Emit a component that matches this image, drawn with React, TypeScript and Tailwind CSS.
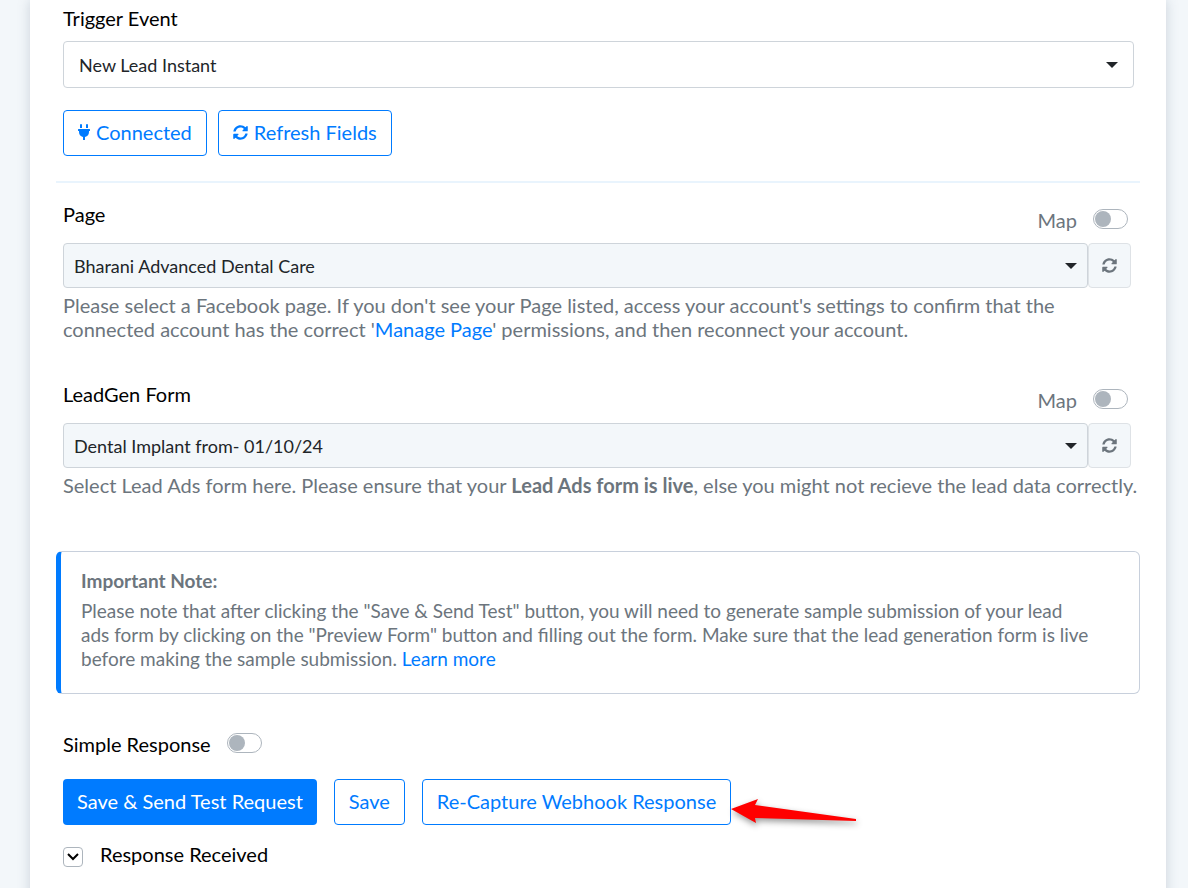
import { useState } from "react";
import type { ReactNode } from "react";
import { FaPlug, FaSyncAlt } from "react-icons/fa";

type ToggleProps = {
  id: string;
  label: string;
  labelClassName: string;
};

function Toggle({ id, label, labelClassName }: Readonly<ToggleProps>) {
  return (
    <div className="flex items-start gap-4">
      <label htmlFor={id} className={labelClassName}>
        {label}
      </label>
      <input
        id={id}
        type="checkbox"
        className="h-5 w-[35px] cursor-pointer appearance-none rounded-full border border-[#adb5bd] bg-white p-px before:block before:size-4 before:rounded-full before:bg-[#adb5bd] checked:border-[#007bff] checked:before:translate-x-[15px] checked:before:bg-[#007bff]"
      />
    </div>
  );
}

function Caret({ className }: Readonly<{ className: string }>) {
  return (
    <svg
      viewBox="0 0 12 6"
      className={`pointer-events-none absolute h-[6px] w-3 fill-[#212529] ${className}`}
      aria-hidden="true"
    >
      <path d="M0 0h12L6 6z" />
    </svg>
  );
}

type MappedFieldProps = {
  id: string;
  label: string;
  value: string;
  children: ReactNode;
};

function MappedField({ id, label, value, children }: Readonly<MappedFieldProps>) {
  return (
    <div className="pr-[9px] pl-[7px]">
      <div className="flex h-[41px] items-start justify-between pr-[3px]">
        <label htmlFor={id} className="leading-6 text-black">
          {label}
        </label>
        <div className="pt-[7px]">
          <Toggle
            id={`${id}-map`}
            label="Map"
            labelClassName="leading-[22px] text-[#6c757d]"
          />
        </div>
      </div>
      <div className="flex h-[45px]">
        <div className="relative flex-1">
          <select
            id={id}
            className="h-full w-full appearance-none rounded-[4px] border border-[#ced4da] bg-[#f3f7fa] px-[10px] text-lg text-[#212529]"
          >
            <option>{value}</option>
          </select>
          <Caret className="top-5 right-[11px]" />
        </div>
        <button
          type="button"
          aria-label={`Refresh ${label}`}
          className="flex w-[43px] items-center justify-center rounded-[4px] border border-[#dee2e6] bg-[#f3f7fa] text-[#6c757d]"
        >
          <FaSyncAlt className="size-[15px]" />
        </button>
      </div>
      <p className="-mr-[9px] pt-[5px] leading-6 text-[#6c757d]">{children}</p>
    </div>
  );
}

const outlineButton =
  "flex h-[46px] items-center rounded-[4px] border border-[#007bff] bg-white px-[14px] pb-[2px] text-[#007bff]";

export default function App() {
  const [open, setOpen] = useState(false);

  return (
    <div className="min-h-screen bg-[#f3f7fa] pr-[22px] pl-[30px] font-['Lato','Liberation_Sans',sans-serif] text-[20px]">
      <main className="min-h-screen bg-white px-[26px] pt-[6px] pb-10 shadow-[0_0_12px_rgba(60,80,110,0.22)]">
        <section className="pr-[6px] pl-[7px]">
          <label htmlFor="trigger-event" className="block h-[35px] leading-6 text-black">
            Trigger Event
          </label>
          <div className="relative h-[47px]">
            <select
              id="trigger-event"
              className="h-full w-full appearance-none rounded-[4px] border border-[#ced4da] bg-white px-[15px] text-lg text-[#212529]"
            >
              <option>New Lead Instant</option>
            </select>
            <Caret className="top-[21px] right-4" />
          </div>
          <div className="flex gap-[11px] pt-[22px] pb-[25px]">
            <button type="button" className={`${outlineButton} gap-[6px]`}>
              <FaPlug className="h-4 w-3" />
              Connected
            </button>
            <button type="button" className={`${outlineButton} gap-[6px]`}>
              <FaSyncAlt className="size-[15px]" />
              Refresh Fields
            </button>
          </div>
        </section>

        <hr className="mb-[19px] border-t-2 border-[#e9f4fd]" />

        <MappedField id="page" label="Page" value="Bharani Advanced Dental Care">
          Please select a Facebook page. If you don't see your Page listed, access your account's
          settings to confirm that the connected account has the correct '
          <a href="#manage-page" className="text-[#007bff]">
            Manage Page
          </a>
          ' permissions, and then reconnect your account.
        </MappedField>

        <div className="pt-[41px]">
          <MappedField id="leadgen-form" label="LeadGen Form" value="Dental Implant from- 01/10/24">
            Select Lead Ads form here. Please ensure that your{" "}
            <strong>Lead Ads form is live</strong>, else you might not recieve the lead data
            correctly.
          </MappedField>
        </div>

        <aside className="mt-[54px] rounded-[6px] border border-l-[5px] border-[#c8d0dc] border-l-[#007bff] pt-[17px] pr-12 pb-[22px] pl-5 text-[19px] leading-6 text-[#6c757d]">
          <h2 className="pb-[6px] font-bold">Important Note:</h2>
          <p>
            Please note that after clicking the "Save &amp; Send Test" button, you will need to
            generate sample submission of your lead ads form by clicking on the "Preview Form"
            button and filling out the form. Make sure that the lead generation form is live before
            making the sample submission.{" "}
            <a href="#learn-more" className="text-[#007bff]">
              Learn more
            </a>
          </p>
        </aside>

        <section className="pt-[39px] pr-[6px] pl-[7px]">
          <Toggle
            id="simple-response"
            label="Simple Response"
            labelClassName="leading-[22px] text-black"
          />
          <div className="flex gap-[17px] pt-6">
            <button
              type="submit"
              className="h-[46px] rounded-[4px] bg-[#007bff] px-[14px] pb-[2px] text-white"
            >
              Save &amp; Send Test Request
            </button>
            <button type="button" className={outlineButton}>
              Save
            </button>
            <div className="relative">
              <button type="button" className={outlineButton}>
                Re-Capture Webhook Response
              </button>
              <svg
                viewBox="0 0 136 40"
                className="pointer-events-none absolute top-3 left-full h-10 w-[136px] drop-shadow-[1px_3px_3px_rgba(0,0,0,0.4)]"
                aria-hidden="true"
              >
                <path
                  d="M0 18 27 8l-3 6 101 14v2l-101-3 1 5z"
                  fill="#ff0000"
                />
              </svg>
            </div>
          </div>
          <button
            type="button"
            aria-expanded={open}
            onClick={() => setOpen(!open)}
            className="flex items-start gap-[17px] pt-[17px] leading-6 text-black"
          >
            <span className="mt-[5px] flex size-5 items-center justify-center rounded-[4px] border border-[#adb5bd]">
              <svg viewBox="0 0 12 12" className="size-3" aria-hidden="true">
                <path d="M1 3l5 5 5-5" fill="none" stroke="currentColor" strokeWidth="2" />
              </svg>
            </span>
            Response Received
          </button>
        </section>
      </main>
    </div>
  );
}
